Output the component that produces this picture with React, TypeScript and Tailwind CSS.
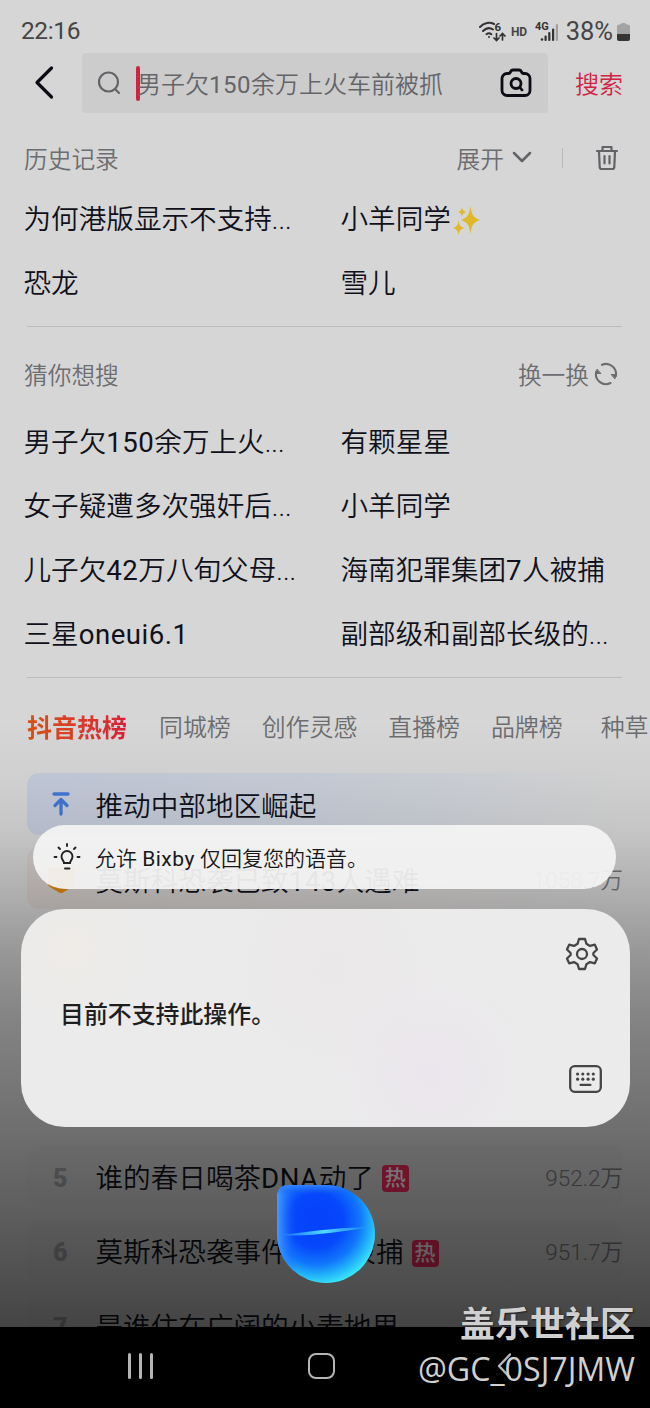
import React from "react";

interface RankItem {
    rank: number;
    title: string;
    heat: string;
    hot?: boolean;
}

const historyItems = ["为何港版显示不支持...", "小羊同学", "恐龙", "雪儿"];

const guessItems = [
    "男子欠150余万上火...",
    "有颗星星",
    "女子疑遭多次强奸后...",
    "小羊同学",
    "儿子欠42万八旬父母...",
    "海南犯罪集团7人被捕",
    "三星oneui6.1",
    "副部级和副部长级的...",
];

const tabs = ["同城榜", "创作灵感", "直播榜", "品牌榜", "种草"];

const rankItems: RankItem[] = [
    { rank: 5, title: "谁的春日喝茶DNA动了", heat: "952.2万", hot: true },
    { rank: 6, title: "莫斯科恐袭事件11人被捕", heat: "951.7万", hot: true },
    { rank: 7, title: "是谁住在广阔的小麦地里", heat: "" },
];

// Latin runs need a heavier weight than the CJK glyphs around them
function Mixed({ text }: { text: string }) {
    return (
        <span className="whitespace-pre">
            {text.split(/([A-Za-z0-9]+(?:\.[0-9]+)?)/).map((part, i) =>
                i % 2 === 1 ? (
                    <span key={i} className="font-normal tracking-[0.5px]">{part}</span>
                ) : (
                    part
                )
            )}
        </span>
    );
}

function Sparkles() {
    return (
        <svg width="28" height="30" viewBox="0 0 28 30" className="ml-[2px]">
            <g fill="#dfb928">
                <path d="M17.500 1C18.600 9 20 13 27.500 15C20 17 18.600 21 17.500 29C16.400 21 15 17 7.500 15C15 13 16.400 9 17.500 1Z" />
                <path d="M5.600 15.500C6.200 20 7.400 22 11.500 23C7.400 24 6.200 26.500 5.600 30C5 26.500 3.800 24 0 23C3.800 22 5 20 5.600 15.500Z" />
                <path d="M9 1.500C9.400 5 10.300 6.200 13.500 7C10.300 7.800 9.400 9 9 12.500C8.600 9 7.700 7.800 5 7C7.700 6.200 8.600 5 9 1.500Z" />
            </g>
        </svg>
    );
}

function StatusBar() {
    return (
        <div className="flex h-[53px] shrink-0 items-center pt-[10px] pr-5 pl-[21px] text-[24.5px] font-normal text-[#454545]">
            <span className="tracking-[-0.4px]">22:16</span>
            <div className="ml-auto flex items-center">
                <svg width="27" height="22" viewBox="0 0 27 22" fill="none" stroke="#333" strokeWidth="2" strokeLinecap="round">
                    <path d="M1 6C5 1.500 11 1 15 3M4 10C7 7 11 6.500 14 8.500M7.500 13.200C9 12 11 12 12.300 13.200" />
                    <circle cx="10" cy="16" r="1" fill="#333" stroke="none" />
                    <path d="M17.500 12.500V19M15 17L17.500 19.500L20 17M23.500 19V12.500M21 15L23.500 12.500L26 15" strokeWidth="1.700" />
                    <text x="15.500" y="10" fontSize="11.500" fontWeight="700" fontFamily="Roboto" fill="#333" stroke="none">6</text>
                </svg>
                <span className="ml-[5px] text-[12px] leading-none font-bold tracking-tight">HD</span>
                <svg width="24" height="22" viewBox="0 0 24 22" className="ml-2" fill="#333">
                    <text x="0" y="9" fontSize="11" fontWeight="700" fontFamily="Roboto">4G</text>
                    <circle cx="7" cy="18.500" r="1.300" />
                    <rect x="9.500" y="14.500" width="2.200" height="5.500" rx="1" />
                    <rect x="13.200" y="11" width="2.200" height="9" rx="1" />
                    <rect x="17" y="7.500" width="2.200" height="12.500" rx="1" />
                    <rect x="20.800" y="3" width="2.200" height="17" rx="1" fill="#a0a0a0" />
                </svg>
                <span className="ml-[7px] text-[25.500px]">38%</span>
                <svg width="13" height="20" viewBox="0 0 13 20" className="ml-1">
                    <path d="M3.500 2.500C3.500 0.500 9.500 0.500 9.500 2.500H11A2 2 0 0 1 13 4.500V12H0V4.500A2 2 0 0 1 2 2.500Z" fill="#a3a3a3" />
                    <path d="M0 12H13V17A2 2 0 0 1 11 19H2A2 2 0 0 1 0 17Z" fill="#353535" />
                </svg>
            </div>
        </div>
    );
}

function SearchBar() {
    return (
        <div className="flex h-[60px] shrink-0 items-center">
            <svg width="20" height="36" viewBox="0 0 20 36" className="ml-[34px]" fill="none" stroke="#0b0c14" strokeWidth="3.200" strokeLinecap="round" strokeLinejoin="round">
                <path d="M17.500 3L3 17.500L17.500 32" />
            </svg>
            <div className="ml-[28px] flex h-[60px] w-[466px] items-center rounded bg-[#cccccc]">
                <svg width="24" height="24" viewBox="0 0 24 24" className="ml-[15px]" fill="none" stroke="#626367" strokeWidth="2.200" strokeLinecap="round">
                    <circle cx="11.500" cy="11" r="9.500" />
                    <path d="M18 18L22 22" />
                </svg>
                <div className="ml-[15px] h-[35px] w-1 rounded-full bg-[#cf2344]" />
                <span className="-ml-[3px] pt-[3px] text-[24px] whitespace-nowrap text-[#646568]">
                    <Mixed text="男子欠150余万上火车前被抓" />
                </span>
                <svg width="32" height="30" viewBox="0 0 32 30" className="mr-4 ml-auto" fill="none" stroke="#0b0c14" strokeWidth="2.800" strokeLinejoin="round" strokeLinecap="round">
                    <path d="M7 5.500H8.500C9.500 5.500 10 5 10.500 4C11 2.500 12 2 13 2H19C20 2 21 2.500 21.500 4C22 5 22.500 5.500 23.500 5.500H25A5 5 0 0 1 30 10.500V22.500A5 5 0 0 1 25 27.500H7A5 5 0 0 1 2 22.500V10.500A5 5 0 0 1 7 5.500Z" />
                    <circle cx="16" cy="15.500" r="5" />
                    <path d="M20 19.500L22 22" />
                </svg>
            </div>
            <span className="ml-[27px] pt-[3px] text-[24px] text-[#cf2344]">搜索</span>
        </div>
    );
}

function SectionHeader({ title, children }: { title: string; children: React.ReactNode }) {
    return (
        <div className="flex h-8 items-center pl-6 text-[23.700px] leading-8 text-[#6c6d70]">
            <span className="pt-[3px]">{title}</span>
            <div className="ml-auto flex items-center">{children}</div>
        </div>
    );
}

function RankRow({ item }: { item: RankItem }) {
    return (
        <div className="ml-[27px] flex h-[62px] w-[596px] shrink-0 items-center rounded-xl bg-black/[0.01] pt-[6px]">
            <span className="w-[68.500px] pl-[26px] text-[25px] font-black text-[#a0a0a3]">{item.rank}</span>
            <span className="text-[27.600px] text-[#10111a]">
                <Mixed text={item.title} />
            </span>
            {item.hot && (
                <span className="ml-2 flex size-[27px] items-center justify-center rounded bg-[#ea2a5c] text-[21px] leading-none font-medium text-[#fff0f3]">
                    热
                </span>
            )}
            <span className="ml-auto text-[22.500px] text-[#77787b]">{item.heat}</span>
        </div>
    );
}

function SettingsIcon() {
    return (
        <svg width="34" height="34" viewBox="0 0 34 34" fill="none" stroke="#454545" strokeWidth="2.300" strokeLinejoin="round">
            <path d="M14 2H20L21.400 6.800L25 8.900L29.800 7.600L32 12.500L28.400 16V18L32 21.500L29.800 26.400L25 25.100L21.400 27.200L20 32H14L12.600 27.200L9 25.100L4.200 26.400L2 21.500L5.600 18V16L2 12.500L4.200 7.600L9 8.900L12.600 6.800Z" />
            <circle cx="17" cy="17" r="5" />
        </svg>
    );
}

function KeyboardIcon() {
    return (
        <svg width="33" height="28" viewBox="0 0 33 28" fill="#454545">
            <rect x="1.200" y="1.200" width="30.600" height="25.600" rx="4.500" fill="none" stroke="#454545" strokeWidth="2.300" />
            {[9, 14.2].map((y) =>
                [8.6, 13.8, 19.1, 24.3].map((x) => <circle key={`${x}-${y}`} cx={x} cy={y} r="1.600" />)
            )}
            <rect x="10.500" y="18.700" width="12" height="2.200" rx="1" />
        </svg>
    );
}

function BixbyOrb() {
    return (
        <svg width="100" height="100" viewBox="0 0 100 100" className="absolute top-[1184px] left-[276px]">
            <defs>
                <radialGradient id="orb" cx="0.4" cy="0.36" r="0.66">
                    <stop offset="0" stopColor="#0540fb" />
                    <stop offset="0.42" stopColor="#0648fb" />
                    <stop offset="0.68" stopColor="#1176fb" />
                    <stop offset="0.86" stopColor="#22b4fa" />
                    <stop offset="1" stopColor="#38e4f8" />
                </radialGradient>
                <linearGradient id="edge" x1="0" y1="0" x2="1" y2="0">
                    <stop offset="0" stopColor="#4b9fff" stopOpacity="0.9" />
                    <stop offset="0.2" stopColor="#1458ff" stopOpacity="0" />
                </linearGradient>
                <linearGradient id="edgeTop" x1="0" y1="0" x2="0" y2="1">
                    <stop offset="0" stopColor="#3e8bff" stopOpacity="0.8" />
                    <stop offset="0.1" stopColor="#1458ff" stopOpacity="0" />
                </linearGradient>
                <linearGradient id="beam" x1="0" y1="0" x2="1" y2="0">
                    <stop offset="0" stopColor="#4fd8ff" stopOpacity="0.2" />
                    <stop offset="0.5" stopColor="#4fdcff" />
                    <stop offset="1" stopColor="#4fd8ff" stopOpacity="0.2" />
                </linearGradient>
            </defs>
            <path d="M12 1H50A49 49 0 1 1 1 50V12A11 11 0 0 1 12 1Z" fill="url(#orb)" />
            <path d="M12 1H50A49 49 0 1 1 1 50V12A11 11 0 0 1 12 1Z" fill="url(#edge)" />
            <path d="M12 1H50A49 49 0 1 1 1 50V12A11 11 0 0 1 12 1Z" fill="url(#edgeTop)" />
            <path d="M5 51C30 48 66 42.500 92 43.500C66 47.500 32 53 5 51Z" fill="url(#beam)" />
        </svg>
    );
}

export default function App() {
    return (
        <div className="relative h-[1408px] w-[650px] overflow-hidden bg-[#d6d6d6] font-[Roboto,'Noto_Sans_CJK_SC',sans-serif] font-[350]">
            <div className="flex h-[1327px] flex-col overflow-hidden">
                <StatusBar />
                <SearchBar />

                {/* History */}
                <div className="mt-[29px]">
                    <SectionHeader title="历史记录">
                        <span className="pt-[3px]">展开</span>
                        <svg width="20" height="14" viewBox="0 0 20 14" className="ml-2" fill="none" stroke="#626367" strokeWidth="2.500" strokeLinecap="round" strokeLinejoin="round">
                            <path d="M2 2L10 10L18 2" />
                        </svg>
                        <div className="ml-[30px] h-5 w-px bg-[#b9b9b9]" />
                        <svg width="24" height="26" viewBox="0 0 24 26" className="mr-[31px] ml-8" fill="none" stroke="#626367" strokeWidth="2.200" strokeLinecap="round" strokeLinejoin="round">
                            <path d="M2 6H22M7.500 5.500V2H16.500V5.500M4 6.500L4.700 22A2 2 0 0 0 6.700 24H17.300A2 2 0 0 0 19.300 22L20 6.500M9.500 11V18.500M14.500 11V18.500" />
                        </svg>
                    </SectionHeader>
                </div>
                <div className="mt-[14px] grid grid-cols-[317px_1fr] pl-[23.500px] text-[27.600px] leading-[64.300px] text-[#10111a]">
                    {historyItems.map((item) => (
                        <div key={item} className="flex h-[64.300px] items-center whitespace-nowrap">
                            {item}
                            {item === "小羊同学" && <Sparkles />}
                        </div>
                    ))}
                </div>
                <div className="mt-[9px] mr-7 ml-[27px] h-px shrink-0 bg-[#bcbcbc]" />

                {/* Suggestions */}
                <div className="mt-[32px]">
                    <SectionHeader title="猜你想搜">
                        <span className="pt-[3px]">换一换</span>
                        <svg width="24" height="24" viewBox="0 0 24 24" className="mr-8 ml-[5px] -translate-y-px" fill="none" stroke="#6c6d70" strokeWidth="2.100" strokeLinecap="round">
                            <path d="M8 2.800A10 10 0 0 1 21.800 14M16.500 21A10 10 0 0 1 2.300 9.500" />
                            <path d="M17.500 12.500H22.500L21 16.500ZM6.500 11.500H1.500L3 7.500Z" fill="#6c6d70" strokeWidth="1" />
                        </svg>
                    </SectionHeader>
                </div>
                <div className="mt-[20px] grid grid-cols-[317px_1fr] pl-[23.500px] text-[27.600px] leading-[64.300px] text-[#10111a]">
                    {guessItems.map((item) => (
                        <div key={item} className="h-[64.300px]">
                            <Mixed text={item} />
                        </div>
                    ))}
                </div>
                <div className="mt-[9px] mr-7 ml-[27px] h-px shrink-0 bg-[#bcbcbc]" />

                {/* Ranking tabs */}
                <div className="mt-[33px] flex h-9 shrink-0 items-center pl-[27px] text-[23.900px] whitespace-nowrap text-[#6c6d70]">
                    <span className="mr-[32px] bg-linear-to-r from-[#d9500f] to-[#d91e38] bg-clip-text text-[25px] font-bold text-transparent">
                        抖音热榜
                    </span>
                    <div className="flex gap-[31px]">
                        {tabs.map((tab) => (
                            <span key={tab} className="last:ml-[7px]">{tab}</span>
                        ))}
                    </div>
                </div>

                {/* Ranking list */}
                <div className="mt-[26px] flex flex-col gap-[12.400px]">
                    <div className="ml-[27px] flex h-[62px] w-[596px] shrink-0 items-center rounded-xl bg-linear-to-r from-[#c3cada] via-[#c9cfd9] to-transparent">
                        <svg width="18" height="24" viewBox="0 0 18 24" className="ml-[25px]" fill="none" stroke="#4477d6" strokeWidth="3.300" strokeLinecap="round" strokeLinejoin="round">
                            <path d="M2 2H16M9 22V9M3 13.500L9 7.500L15 13.500" />
                        </svg>
                        <span className="ml-[25.500px] pt-[6px] text-[27.600px] text-[#10111a]">推动中部地区崛起</span>
                    </div>
                    <div className="ml-[27px] flex h-[62px] w-[596px] shrink-0 items-center rounded-xl bg-linear-to-r from-[#d3cdca] to-transparent">
                        <svg width="26" height="30" viewBox="0 0 26 30" className="mt-[2px] ml-[21px]">
                            <path d="M0 4H26V20Q26 22 24 23L15 28.500Q13 29.500 11 28.500L2 23Q0 22 0 20Z" fill="#dc8912" />
                        </svg>
                        <span className="ml-[21.500px] pt-2 text-[27.600px] text-[#10111a]">
                            <Mixed text="莫斯科恐袭已致143人遇难" />
                        </span>
                        <span className="ml-auto pt-[5px] text-[22.500px] text-[#77787b]">1058.7万</span>
                    </div>
                    {/* ranks 2-4 sit under the assistant card */}
                    <div className="h-[210.800px] shrink-0" />
                    {rankItems.map((item) => (
                        <RankRow key={item.rank} item={item} />
                    ))}
                </div>
            </div>

            {/* Dim scrim behind the assistant */}
            <div className="absolute inset-x-0 top-[720px] h-[607px] bg-[linear-gradient(to_bottom,rgba(0,0,0,0)_0px,rgba(0,0,0,.03)_60px,rgba(0,0,0,.08)_110px,rgba(0,0,0,.175)_170px,rgba(0,0,0,.29)_230px,rgba(0,0,0,.39)_300px,rgba(0,0,0,.475)_400px,rgba(0,0,0,.56)_490px,rgba(0,0,0,.68)_607px)]" />

            {/* Hint bubble */}
            <div className="absolute top-[825px] left-[33px] flex h-[64px] w-[583px] items-center rounded-full bg-[#f3f3f3]/[0.94]">
                <svg width="28" height="28" viewBox="0 0 28 28" className="ml-5" fill="none" stroke="#222" strokeWidth="1.900" strokeLinecap="round">
                    <path d="M14 1V3M5.500 4.500L7 6M22.500 4.500L21 6M1.500 14H3.500M24.500 14H26.500M11 20C11 17.500 8.500 17 8.500 13.500A5.500 5.500 0 0 1 19.500 13.500C19.500 17 17 17.500 17 20ZM12 25.500H16.500" />
                </svg>
                <span className="ml-[14px] pt-[5px] text-[21px] text-[#181818]">
                    <Mixed text="允许 Bixby 仅回复您的语音。" />
                </span>
            </div>

            {/* Answer card */}
            <div className="absolute top-[909px] left-[21px] flex h-[218px] w-[609px] items-center rounded-[44px] bg-[#ebebeb] bg-[radial-gradient(circle_at_410px_165px,#ebe6ed_0px,transparent_110px),radial-gradient(circle_at_50px_40px,#eeebe7_0px,transparent_80px),radial-gradient(circle_at_310px_60px,#ebe8e9_0px,transparent_110px)]">
                <span className="ml-[39px] -translate-y-[2px] text-[23.900px] font-medium text-[#1e1e1e]">目前不支持此操作。</span>
                <div className="mr-7 ml-auto flex h-full flex-col items-end justify-between pt-[28px] pb-[34px]">
                    <div className="mr-[3px]"><SettingsIcon /></div>
                    <KeyboardIcon />
                </div>
            </div>

            <BixbyOrb />

            {/* System navigation */}
            <div className="flex h-[81px] items-center bg-black pb-[3px]">
                <div className="ml-[128px] flex gap-2">
                    <div className="h-[26px] w-[3px] rounded-full bg-[#b5b5b5]" />
                    <div className="h-[26px] w-[3px] rounded-full bg-[#b5b5b5]" />
                    <div className="h-[26px] w-[3px] rounded-full bg-[#b5b5b5]" />
                </div>
                <div className="ml-[155px] h-[26px] w-[27px] rounded-[8px] border-[2.500px] border-[#b5b5b5]" />
                <svg width="14" height="26" viewBox="0 0 14 26" className="ml-[162px]" fill="none" stroke="#b5b5b5" strokeWidth="2.500" strokeLinecap="round" strokeLinejoin="round">
                    <path d="M13 1.500L2 13L13 24.500" />
                </svg>
            </div>

            {/* Community watermark */}
            <div className="absolute top-[1305px] right-[15px] flex flex-col items-end whitespace-nowrap text-[#d0d0d0]">
                <span className="text-[35px] leading-[42px] font-bold [text-shadow:1px_1px_2px_rgba(0,0,0,.6)]">盖乐世社区</span>
                <span className="mt-px font-['Open_Sans',sans-serif] text-[32.200px] leading-[42px] font-normal">@GC_0SJ7JMW</span>
            </div>
        </div>
    );
}
